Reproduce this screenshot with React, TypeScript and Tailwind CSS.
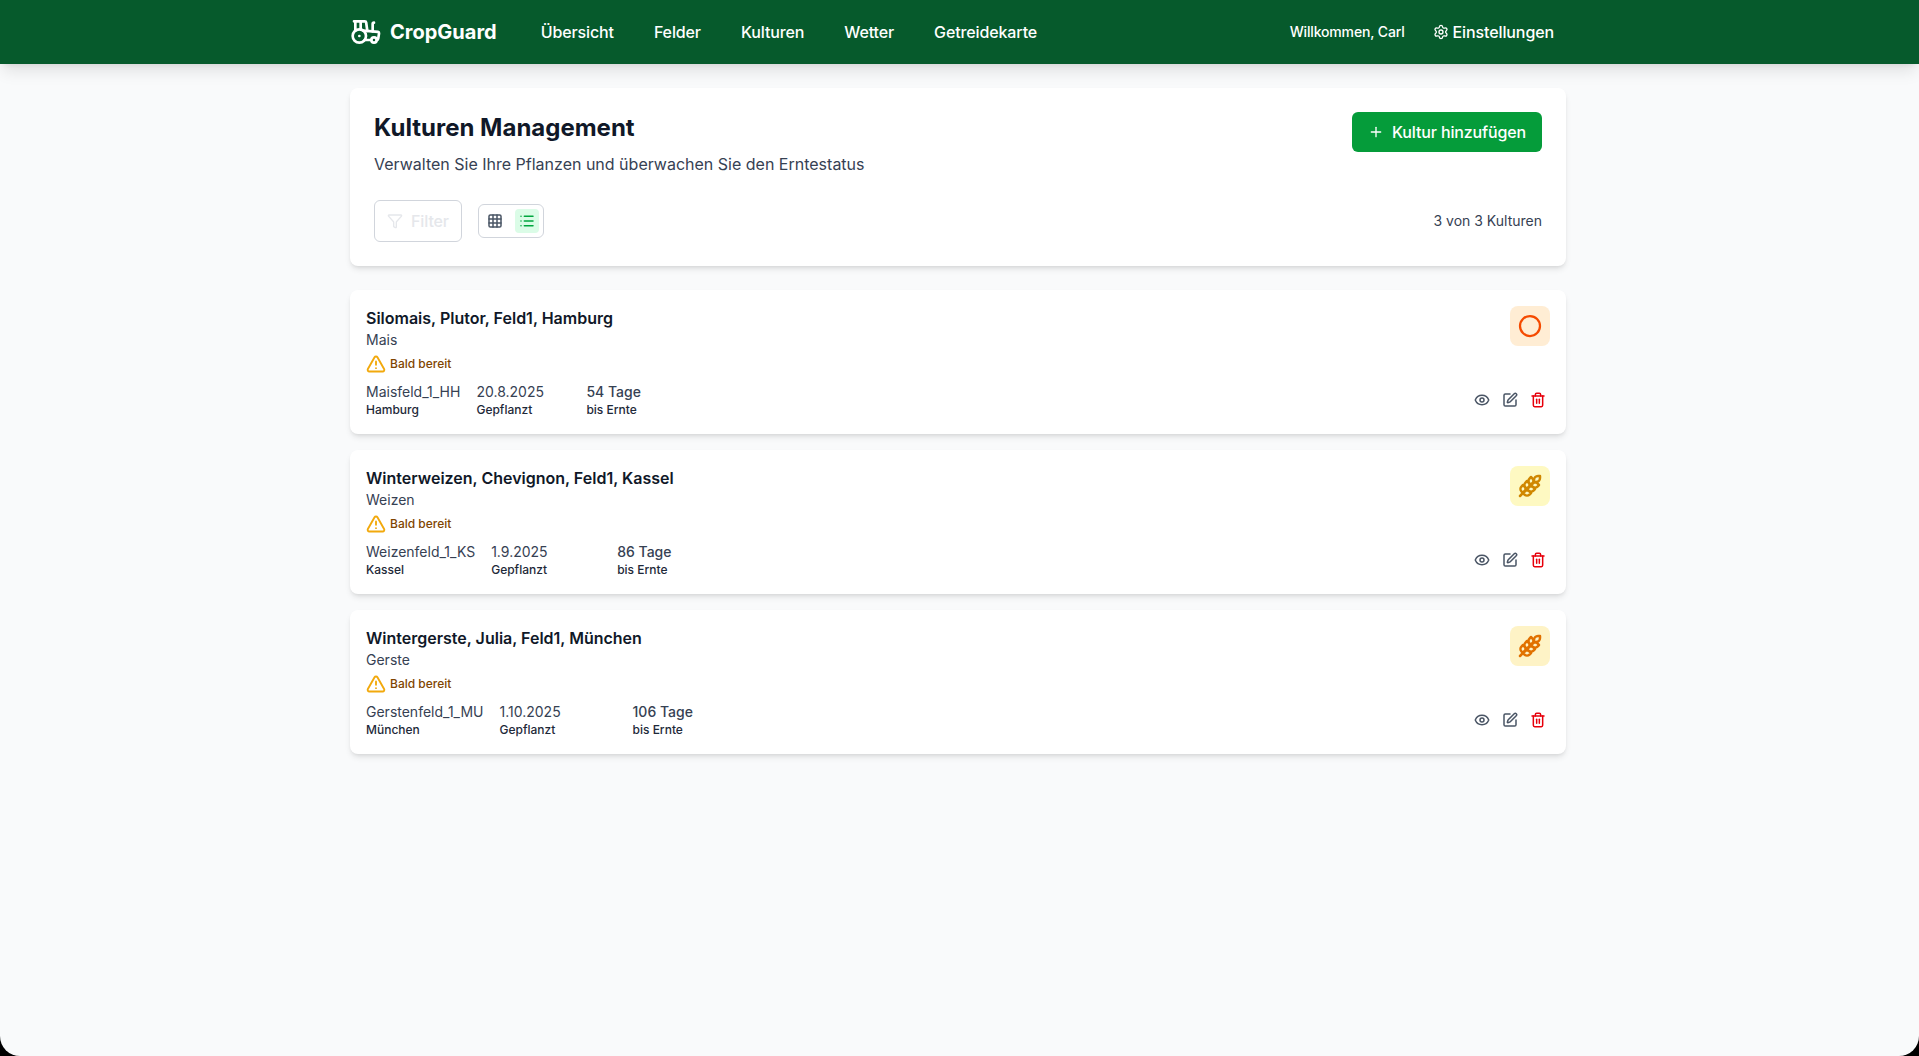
import { Circle, Eye, Funnel, Grid3x3, List, Plus, Settings, SquarePen, Tractor, Trash2, TriangleAlert, Wheat } from 'lucide-react'

const crops = [
    { name: 'Silomais, Plutor, Feld1, Hamburg', type: 'Mais', field: 'Maisfeld_1_HH', city: 'Hamburg', planted: '20.8.2025', days: '54 Tage', iconBg: 'bg-orange-100', iconColor: 'text-orange-600', kind: 'circle', plantedWidth: 'w-[94px]' },
    { name: 'Winterweizen, Chevignon, Feld1, Kassel', type: 'Weizen', field: 'Weizenfeld_1_KS', city: 'Kassel', planted: '1.9.2025', days: '86 Tage', iconBg: 'bg-yellow-100', iconColor: 'text-yellow-600', kind: 'wheat', plantedWidth: 'w-[110px]' },
    { name: 'Wintergerste, Julia, Feld1, München', type: 'Gerste', field: 'Gerstenfeld_1_MU', city: 'München', planted: '1.10.2025', days: '106 Tage', iconBg: 'bg-amber-100', iconColor: 'text-amber-600', kind: 'wheat', plantedWidth: 'w-[117px]' },
]

const navItems = ['Übersicht', 'Felder', 'Kulturen', 'Wetter', 'Getreidekarte']

const App = () => {
    return (
        <div className="bg-black h-screen overflow-hidden font-['Inter',sans-serif]">
            <div className="h-full bg-gray-50 rounded-b-[20px] overflow-hidden">
                {/* Navbar */}
                <header className="h-16 bg-[#065a2c] shadow-lg">
                    <div className="w-[1216px] h-full ml-[350px] flex items-center justify-between text-white">
                        <div className="flex items-center">
                            <div className="flex items-center gap-2">
                                <Tractor size={32} />
                                <span className="text-xl font-bold">CropGuard</span>
                            </div>
                            <nav className="flex items-center gap-10 ml-11">
                                {navItems.map((item) => (
                                    <a key={item} className="text-base font-medium tracking-[-0.12px]">{item}</a>
                                ))}
                            </nav>
                        </div>
                        <div className="flex items-center gap-7 pr-3">
                            <span className="text-sm font-medium tracking-[-0.15px]">Willkommen, Carl</span>
                            <div className="flex items-center gap-1">
                                <Settings size={16} />
                                <span className="text-base font-medium tracking-[-0.11px]">Einstellungen</span>
                            </div>
                        </div>
                    </div>
                </header>

                <main className="w-[1216px] ml-[350px] pt-6 space-y-6">
                    {/* Page header */}
                    <div className="bg-white rounded-lg shadow-md p-6">
                        <div className="flex justify-between items-start">
                            <div>
                                <h1 className="text-2xl font-bold text-gray-900">Kulturen Management</h1>
                                <p className="text-base text-gray-700 mt-2">Verwalten Sie Ihre Pflanzen und überwachen Sie den Erntestatus</p>
                            </div>
                            <button className="flex items-center gap-2 h-10 px-4 bg-[#059c3a] text-white font-medium tracking-[-0.14px] rounded-md">
                                <Plus size={16} />
                                Kultur hinzufügen
                            </button>
                        </div>
                        <div className="flex justify-between items-center mt-6">
                            <div className="flex items-center gap-4">
                                <button className="flex items-center gap-2 h-[42px] px-3 border border-gray-300 rounded-md text-gray-200 font-medium tracking-[-0.11px]">
                                    <Funnel size={16} />
                                    Filter
                                </button>
                                <div className="flex items-center gap-2 border border-gray-300 rounded-md p-1">
                                    <span className="w-6 h-6 flex items-center justify-center text-gray-600">
                                        <Grid3x3 size={16} strokeWidth={2.25} />
                                    </span>
                                    <span className="w-6 h-6 flex items-center justify-center rounded bg-green-100 text-green-600">
                                        <List size={16} strokeWidth={2.25} />
                                    </span>
                                </div>
                            </div>
                            <span className="text-sm text-gray-700">3 von 3 Kulturen</span>
                        </div>
                    </div>

                    {/* Crop list */}
                    <div className="space-y-4">
                        {crops.map((crop) => (
                            <div key={crop.name} className="bg-white rounded-lg shadow-md p-4 flex justify-between">
                                <div>
                                    <h3 className="text-base font-semibold text-gray-900">{crop.name}</h3>
                                    <p className="text-sm text-gray-700">{crop.type}</p>
                                    <div className="flex items-center gap-1 mt-1">
                                        <TriangleAlert size={20} strokeWidth={2.25} className="text-[#f2a90c]" />
                                        <span className="text-xs font-medium text-[#7f4500]">Bald bereit</span>
                                    </div>
                                    <div className="flex gap-4 mt-2">
                                        <div>
                                            <p className="text-sm text-gray-700">{crop.field}</p>
                                            <p className="text-xs font-medium text-gray-800">{crop.city}</p>
                                        </div>
                                        <div className={crop.plantedWidth}>
                                            <p className="text-sm text-gray-700">{crop.planted}</p>
                                            <p className="text-xs font-medium text-gray-800">Gepflanzt</p>
                                        </div>
                                        <div>
                                            <p className="text-sm font-medium text-gray-700">{crop.days}</p>
                                            <p className="text-xs font-medium text-gray-800">bis Ernte</p>
                                        </div>
                                    </div>
                                </div>
                                <div className="flex flex-col justify-between items-end">
                                    <div className={`w-10 h-10 rounded-lg flex items-center justify-center ${crop.iconBg} ${crop.iconColor}`}>
                                        {crop.kind === 'circle'
                                            ? <Circle size={24} strokeWidth={2.25} />
                                            : <Wheat size={24} strokeWidth={2.5} />}
                                    </div>
                                    <div className="flex items-center gap-3 pb-2.5 pr-1">
                                        <Eye size={16} strokeWidth={2.25} className="text-gray-600" />
                                        <SquarePen size={16} strokeWidth={2.25} className="text-gray-600" />
                                        <Trash2 size={16} strokeWidth={2.25} className="text-red-600" />
                                    </div>
                                </div>
                            </div>
                        ))}
                    </div>
                </main>
            </div>
        </div>
    )
}

export default App
